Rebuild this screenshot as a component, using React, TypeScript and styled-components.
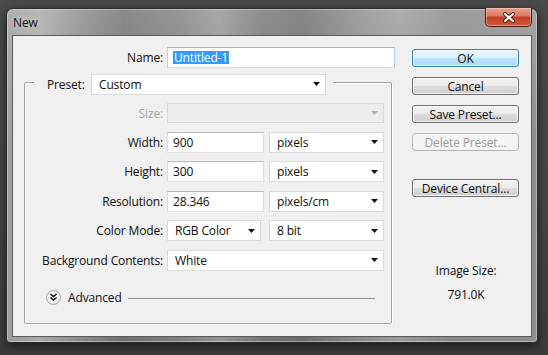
import styled, { createGlobalStyle } from 'styled-components';

const GlobalStyle = createGlobalStyle`
  html, body {
    margin: 0;
    padding: 0;
  }
  body {
    width: 548px;
    height: 355px;
    overflow: hidden;
    background: linear-gradient(180deg, #4a4a4a 0%, #474747 55%, #3b3b3b 100%);
    font-family: "Open Sans", "Noto Sans", sans-serif;
    font-size: 12px;
    letter-spacing: -0.15px;
    color: #0e0e0e;
  }
`;

const Window = styled.div`
  margin: 8px 0 0 6px;
  width: 532px;
  height: 335px;
  box-sizing: border-box;
  border: 1px solid #2c2c2c;
  border-radius: 7px 7px 4px 4px;
  padding: 0 5px 5px;
  display: flex;
  flex-direction: column;
  background:
    linear-gradient(180deg, rgba(255, 255, 255, 0.18) 0%, rgba(255, 255, 255, 0) 40%),
    linear-gradient(
      90deg,
      #9c9c9c 0%,
      #a9a9a9 6%,
      #8a8a8a 14%,
      #707070 22%,
      #7e7e7e 32%,
      #959595 40%,
      #767676 48%,
      #6c6c6c 56%,
      #8a8a8a 66%,
      #9b9b9b 74%,
      #878787 84%,
      #8f8f8f 100%
    );
  box-shadow:
    inset 0 0 0 1px rgba(255, 255, 255, 0.35),
    0 3px 10px rgba(0, 0, 0, 0.55);
`;

const TitleBar = styled.div`
  height: 26px;
  flex: none;
  display: flex;
  align-items: center;
  justify-content: space-between;
`;

const Title = styled.span`
  margin-left: 1px;
  color: #111;
  text-shadow: 0 0 6px rgba(255, 255, 255, 0.6);
`;

const CloseButton = styled.div`
  align-self: flex-start;
  margin-top: -1px;
  width: 47px;
  height: 19px;
  box-sizing: border-box;
  border: 1px solid #4a1b12;
  border-top: none;
  border-radius: 0 0 5px 5px;
  display: flex;
  align-items: center;
  justify-content: center;
  background: linear-gradient(180deg, #e8a08c 0%, #d97a62 45%, #c23f25 50%, #d0583a 100%);
  box-shadow: inset 0 0 0 1px rgba(255, 220, 210, 0.45);
`;

const Client = styled.div`
  flex: 1;
  display: flex;
  box-sizing: border-box;
  background: #f0f0f0;
  border: 1px solid #5a5a5a;
`;

const LeftColumn = styled.div`
  padding: 11px 0 0 11px;
`;

const RightColumn = styled.div`
  margin-left: 17px;
  padding-top: 13px;
  width: 107px;
  display: flex;
  flex-direction: column;
  gap: 10px;
`;

const Row = styled.div<{ $h?: number }>`
  display: flex;
  align-items: center;
  height: ${({ $h }) => $h ?? 21}px;
`;

const Label = styled.span<{ $w: number; $disabled?: boolean }>`
  width: ${({ $w }) => $w}px;
  margin-right: 4px;
  text-align: right;
  white-space: nowrap;
  color: ${({ $disabled }) => ($disabled ? '#a3a3a3' : '#0e0e0e')};
`;

const TextBox = styled.div<{ $w: number; $focused?: boolean }>`
  width: ${({ $w }) => $w}px;
  height: 21px;
  box-sizing: border-box;
  padding-left: 5px;
  display: flex;
  align-items: center;
  background: #fff;
  border: 1px solid;
  border-color: ${({ $focused }) =>
    $focused ? '#8fb8e0 #b6d3ee #c2dbf1 #b6d3ee' : '#b9b9b9 #dcdcdc #e3e3e3 #dcdcdc'};
`;

const Selected = styled.span`
  background: #3399ff;
  color: #fff;
  padding: 0 1px;
  line-height: 13px;
`;

const Combo = styled.div<{ $w: number; $h?: number; $disabled?: boolean }>`
  width: ${({ $w }) => $w}px;
  height: ${({ $h }) => $h ?? 21}px;
  box-sizing: border-box;
  padding: 0 5px 0 7px;
  display: flex;
  align-items: center;
  justify-content: space-between;
  white-space: nowrap;
  background: ${({ $disabled }) => ($disabled ? '#ececec' : '#fff')};
  border: 1px solid #d9d9d9;
`;

const Gap = styled.span<{ $w: number }>`
  width: ${({ $w }) => $w}px;
  flex: none;
`;

const Group = styled.div`
  margin-top: 14px;
  width: 368px;
  box-sizing: border-box;
  border: 1px solid #a2a2a2;
  border-radius: 2px;
  padding: 0 7px 17px 0;
  box-shadow:
    1px 1px 0 #ffffff,
    inset 1px 1px 0 #ffffff;
`;

const Legend = styled.div`
  margin: -10px 0 0 9px;
  padding: 0 7px 0 13px;
  width: fit-content;
  height: 22px;
  display: flex;
  align-items: center;
  background: #f0f0f0;
`;

const LegendLabel = styled.span`
  width: 39px;
  margin-right: 5px;
  white-space: nowrap;
`;

const Rows = styled.div`
  margin-top: 8px;
  display: flex;
  flex-direction: column;
  gap: 8.5px;
`;

const AdvancedRow = styled.div`
  margin-top: 19px;
  padding-left: 21px;
  height: 16px;
  display: flex;
  align-items: center;
`;

const RoundToggle = styled.div`
  width: 15px;
  height: 15px;
  box-sizing: border-box;
  border-radius: 50%;
  border: 1px solid #a9a9a9;
  background: radial-gradient(circle at 50% 30%, #ffffff 0%, #f4f4f4 50%, #d9d9d9 100%);
  display: flex;
  align-items: center;
  justify-content: center;
  margin-right: 7px;
`;

const Rule = styled.div`
  flex: 1;
  height: 1px;
  margin: 1px 9px 0 6px;
  background: #8d8d8d;
`;

const Button = styled.div<{ $variant?: 'default' | 'disabled'; $gapTop?: number }>`
  height: 18px;
  margin-top: ${({ $gapTop }) => $gapTop ?? 0}px;
  box-sizing: border-box;
  border-radius: 3px;
  display: flex;
  align-items: center;
  justify-content: center;
  white-space: nowrap;
  border: 1px solid
    ${({ $variant }) =>
      $variant === 'default' ? '#3c7fb1' : $variant === 'disabled' ? '#b5b8ba' : '#707070'};
  color: ${({ $variant }) => ($variant === 'disabled' ? '#9c9c9c' : '#0e0e0e')};
  background: ${({ $variant }) =>
    $variant === 'default'
      ? 'linear-gradient(180deg, #eaf6fd 0%, #d9f0fc 50%, #bee6fd 50%, #a7d9f5 100%)'
      : $variant === 'disabled'
        ? '#f4f4f4'
        : 'linear-gradient(180deg, #f2f2f2 0%, #ebebeb 50%, #dddddd 50%, #cfcfcf 100%)'};
  box-shadow: inset 0 0 0 1px
    ${({ $variant }) => ($variant === 'disabled' ? 'transparent' : 'rgba(255, 255, 255, 0.7)')};
`;

const InfoBlock = styled.div`
  margin-top: 56px;
  display: flex;
  flex-direction: column;
  align-items: center;
  gap: 8px;
  line-height: 16px;
  padding-left: 1px;
`;

const DropArrow = ({ disabled }: { disabled?: boolean }) => (
  <svg width="7" height="4" viewBox="0 0 7 4">
    <path d="M0 0h7L3.5 4z" fill={disabled ? '#b0b0b0' : '#111'} />
  </svg>
);

const CloseGlyph = () => (
  <svg width="14" height="11" viewBox="0 0 14 11">
    <path d="M3 2l8 7M11 2l-8 7" stroke="#5a1c10" strokeWidth="4" strokeLinecap="round" />
    <path d="M3 2l8 7M11 2l-8 7" stroke="#ffffff" strokeWidth="2.2" strokeLinecap="round" />
  </svg>
);

const ChevronsDown = () => (
  <svg width="9" height="9" viewBox="0 0 9 9">
    <path d="M1.5 1l3 2.5 3-2.5M1.5 4.5l3 2.5 3-2.5" stroke="#111" strokeWidth="1.4" fill="none" />
  </svg>
);

export default function App() {
  return (
    <>
      <GlobalStyle />
      <Window>
        <TitleBar>
          <Title>New</Title>
          <CloseButton>
            <CloseGlyph />
          </CloseButton>
        </TitleBar>
        <Client>
          <LeftColumn>
            <Row>
              <Label $w={139}>Name:</Label>
              <TextBox $w={228} $focused>
                <Selected>Untitled-1</Selected>
              </TextBox>
            </Row>
            <Group>
              <Legend>
                <LegendLabel>Preset:</LegendLabel>
                <Combo $w={235}>
                  Custom
                  <DropArrow />
                </Combo>
              </Legend>
              <Rows>
                <Row $h={20}>
                  <Label $w={138} $disabled>
                    Size:
                  </Label>
                  <Combo $w={217} $h={20} $disabled>
                    <span />
                    <DropArrow disabled />
                  </Combo>
                </Row>
                <Row>
                  <Label $w={138}>Width:</Label>
                  <TextBox $w={97}>900</TextBox>
                  <Gap $w={5} />
                  <Combo $w={115}>
                    pixels
                    <DropArrow />
                  </Combo>
                </Row>
                <Row>
                  <Label $w={138}>Height:</Label>
                  <TextBox $w={97}>300</TextBox>
                  <Gap $w={5} />
                  <Combo $w={115}>
                    pixels
                    <DropArrow />
                  </Combo>
                </Row>
                <Row>
                  <Label $w={138}>Resolution:</Label>
                  <TextBox $w={97}>28.346</TextBox>
                  <Gap $w={5} />
                  <Combo $w={115}>
                    pixels/cm
                    <DropArrow />
                  </Combo>
                </Row>
                <Row>
                  <Label $w={138}>Color Mode:</Label>
                  <Combo $w={94}>
                    RGB Color
                    <DropArrow />
                  </Combo>
                  <Gap $w={8} />
                  <Combo $w={115}>
                    8 bit
                    <DropArrow />
                  </Combo>
                </Row>
                <Row>
                  <Label $w={138}>Background Contents:</Label>
                  <Combo $w={217}>
                    White
                    <DropArrow />
                  </Combo>
                </Row>
              </Rows>
              <AdvancedRow>
                <RoundToggle>
                  <ChevronsDown />
                </RoundToggle>
                <span>Advanced</span>
                <Rule />
              </AdvancedRow>
            </Group>
          </LeftColumn>
          <RightColumn>
            <Button $variant="default">OK</Button>
            <Button>Cancel</Button>
            <Button>Save Preset...</Button>
            <Button $variant="disabled">Delete Preset...</Button>
            <Button $gapTop={18}>Device Central...</Button>
            <InfoBlock>
              <span>Image Size:</span>
              <span>791.0K</span>
            </InfoBlock>
          </RightColumn>
        </Client>
      </Window>
    </>
  );
}
